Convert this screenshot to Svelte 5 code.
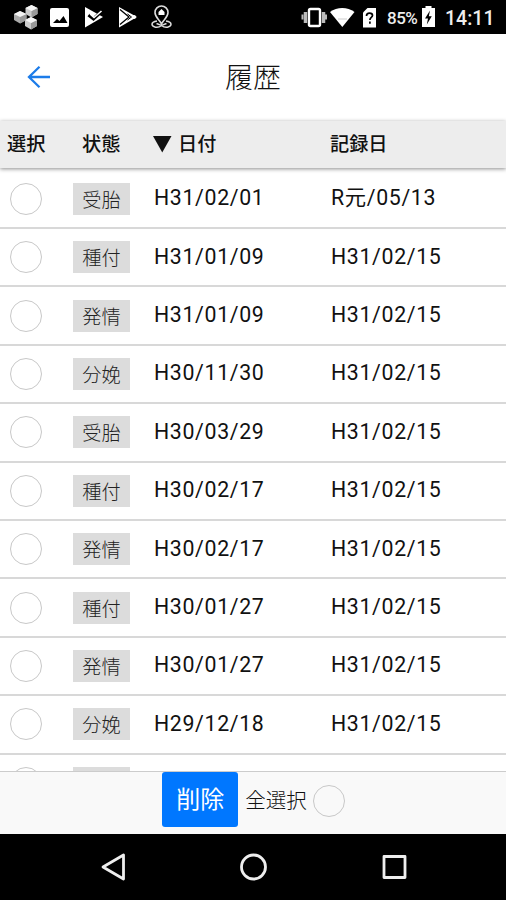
<script lang="ts">
	type Row = { status: string; date: string; recorded: string };

	const rows: Row[] = [
		{ status: '受胎', date: 'H31/02/01', recorded: 'R元/05/13' },
		{ status: '種付', date: 'H31/01/09', recorded: 'H31/02/15' },
		{ status: '発情', date: 'H31/01/09', recorded: 'H31/02/15' },
		{ status: '分娩', date: 'H30/11/30', recorded: 'H31/02/15' },
		{ status: '受胎', date: 'H30/03/29', recorded: 'H31/02/15' },
		{ status: '種付', date: 'H30/02/17', recorded: 'H31/02/15' },
		{ status: '発情', date: 'H30/02/17', recorded: 'H31/02/15' },
		{ status: '種付', date: 'H30/01/27', recorded: 'H31/02/15' },
		{ status: '発情', date: 'H30/01/27', recorded: 'H31/02/15' },
		{ status: '分娩', date: 'H29/12/18', recorded: 'H31/02/15' },
		{ status: '', date: '', recorded: '' }
	];

	let selected: boolean[] = $state(rows.map(() => false));
	let allSelected: boolean = $derived(selected.every((s) => s));

	function toggleAll() {
		const next = !allSelected;
		selected = rows.map(() => next);
	}
</script>

<div class="screen">
	<div class="statusbar">
		<svg class="notifications" width="180" height="34" viewBox="0 0 180 34">
			<!-- hexagons -->
			<path d="M31.500 5l6 3v6l-6 3.500-6-3.500V8z" fill="#ccc" />
			<path d="M20 11l6.500 3v6L20 23.500 14 20v-6z" fill="#aaa" />
			<path d="M31 17l6 3v6l-6 3.500-6-3.500v-6z" fill="#ccc" />
			<path d="M31.500 11l6-3v6l-6 3.500zM20 17l6.500-3v6L20 23.500zM31 23l6-3v6l-6 3.500z" fill="#999" />
			<path d="M25.500 8l6-3 6 3-6 3zM14 14l6-3 6.500 3-6.500 3zM25 20l6-3 6 3-6 3z" fill="#f4f4f4" />
			<!-- picture -->
			<rect x="50" y="8" width="19" height="19" rx="2" fill="#fff" />
			<path d="M53 23l4-4 2.500 2 4-5 4 7z" fill="#000" />
			<!-- play with check -->
			<path d="M85 7l18 10-18 10.500z" fill="#fff" />
			<path d="M88.500 15l5 4 9.500-9" fill="none" stroke="#000" stroke-width="3.200" />
			<path d="M90 14l4 3.500 7.500-6.500" fill="none" stroke="#fff" stroke-width="1.600" />
			<!-- play -->
			<path d="M119 7l18 10-18 10.500z" fill="#fff" />
			<path d="M120 9.500l9 7.500-9 7.500" fill="none" stroke="#000" stroke-width="1.300" />
			<path d="M127.500 14l4 3-4 3" fill="none" stroke="#000" stroke-width="1" />
			<circle cx="134" cy="17" r="2" fill="#fff" />
			<!-- pin -->
			<path d="M161.500 24c-2-4.500-6.500-6.500-6.500-11.500a6.500 6.500 0 0 1 13 0c0 5-4.500 7-6.500 11.500z" fill="none" stroke="#ddd" stroke-width="1.600" />
			<path d="M158.500 15v-3l3-3 3 3v3z" fill="#fff" />
			<path d="M157 21c-3 .500-5 1.500-5 3.200 0 1.500 1.500 2.500 3.500 3 2.500.500 4.500-.500 6-1.700 1.500 1.200 3.500 2.200 6 1.700 2-.500 3.500-1.500 3.500-3 0-1.700-2-2.700-5-3.200M156.500 23.500l5 2 5-2" fill="none" stroke="#ddd" stroke-width="1.500" />
		</svg>
		<div class="system">
			<svg width="85" height="34" viewBox="300 0 85 34">
				<rect x="309" y="9" width="11" height="17" rx="1.500" fill="none" stroke="#fff" stroke-width="2.400" />
				<path d="M305.500 12v11M323.500 12v11" stroke="#bbb" stroke-width="3.500" />
				<path d="M302.500 14.500v5M326 14.500v5" stroke="#bbb" stroke-width="2" />
				<path d="M330 12c7-5.500 17.500-5.500 24.500 0l-12.200 15z" fill="#fff" />
				<path d="M338 19h9" stroke="#ccc" stroke-width="1" />
				<path d="M367.500 8H376v19.500h-13V12.500z" fill="#fff" />
				<path d="M366.500 16c0-4 6-3.500 6-.500 0 2-2.600 2-2.600 4.500M369.900 21.500v2.200" fill="none" stroke="#000" stroke-width="1.700" />
			</svg>
			<span class="percent">85%</span>
			<svg width="14" height="34" viewBox="420 0 14 34">
				<path d="M421 8h3.500V6h6v2h3.500v19h-13z" fill="#fff" />
				<path d="M429 10.500l-5 8h3l-1.200 6 5-8.200h-3z" fill="#000" />
			</svg>
			<span class="clock">14:11</span>
		</div>
	</div>

	<header>
		<button class="back" aria-label="戻る">
			<svg width="24" height="24" viewBox="0 0 24 24">
				<path d="M12.500 1.700L2 12l10.500 10.300M2 12h21" fill="none" stroke="#1c7ce9" stroke-width="2.300" />
			</svg>
		</button>
		<h1>履歴</h1>
	</header>

	<div class="columns heading">
		<span>選択</span>
		<span>状態</span>
		<span class="sort"><svg width="19" height="17" viewBox="0 0 19 17"><path d="M0 0h18.500L9.250 16.500z" fill="#111" /></svg>日付</span>
		<span>記録日</span>
	</div>

	<div class="list">
		{#each rows as row, i}
			<div class="columns row">
				<button class="radio" class:on={selected[i]} aria-label="選択" onclick={() => (selected[i] = !selected[i])}></button>
				<span class="badge">{row.status}</span>
				<span class="date">{row.date}</span>
				<span class="date">{row.recorded}</span>
			</div>
		{/each}
	</div>

	<footer>
		<button class="delete">削除</button>
		<span class="all">全選択</span>
		<button class="radio" class:on={allSelected} aria-label="全選択" onclick={toggleAll}></button>
	</footer>

	<nav>
		<svg width="506" height="66" viewBox="0 0 506 66">
			<g fill="none" stroke="#eee" stroke-width="2.800" stroke-linejoin="round">
				<path d="M123.500 21v24L103 33z" />
				<circle cx="253.500" cy="33" r="12" />
				<rect x="384" y="22.500" width="21" height="21" />
			</g>
		</svg>
	</nav>
</div>

<style>
	:global(body) {
		margin: 0;
	}

	.screen {
		display: flex;
		flex-direction: column;
		width: 506px;
		height: 900px;
		overflow: hidden;
		background: #fff;
		color: #111;
		font-family: Roboto, "Noto Sans CJK JP", sans-serif;
	}

	button {
		padding: 0;
		border: 0;
		background: none;
		font-family: inherit;
	}

	svg {
		display: block;
	}

	.statusbar {
		display: flex;
		justify-content: space-between;
		flex: none;
		height: 34px;
		background: #000;
		color: #eee;
	}

	.system {
		display: flex;
		align-items: center;
		width: 206px;
	}

	.percent {
		width: 34px;
		margin: 2px 0 0 2px;
		font-size: 17px;
		font-weight: 500;
		letter-spacing: -0.5px;
	}

	.clock {
		margin: 2px 0 0 10px;
		font-size: 19.5px;
		font-weight: 500;
	}

	header {
		display: grid;
		grid-template-columns: 77px 1fr 77px;
		align-items: center;
		flex: none;
		height: 87px;
	}

	.back {
		justify-self: center;
		margin-top: -2px;
	}

	h1 {
		margin: 2px 0 0;
		font-size: 28px;
		font-weight: 300;
		line-height: 40px;
		text-align: center;
	}

	.columns {
		display: grid;
		grid-template-columns: 73px 81px 177px 1fr;
		align-items: center;
		flex: none;
	}

	.heading {
		position: relative;
		height: 47px;
		box-sizing: border-box;
		background: #ededed;
		box-shadow: 0 1px 4px rgba(0, 0, 0, 0.45);
		font-size: 19.2px;
		font-weight: 500;
		line-height: 28px;
	}

	.heading span {
		margin-left: -1px;
	}

	.heading span:first-child {
		padding-left: 8px;
	}

	.heading span:nth-child(2) {
		padding-left: 10px;
	}

	.sort {
		display: flex;
		align-items: center;
		gap: 6px;
	}

	.sort svg {
		margin-top: -1px;
	}

	.list {
		flex: 1;
		min-height: 0;
		padding-top: 2.6px;
		overflow: hidden;
	}

	.row {
		height: 58.4px;
		box-sizing: border-box;
		border-bottom: 2px solid #d8d8d8;
	}

	.radio {
		width: 32px;
		height: 32px;
		box-sizing: border-box;
		border: 1.5px solid #c8c8c8;
		border-radius: 50%;
	}

	.radio.on {
		border-color: #0077ff;
		background: #0077ff;
	}

	.row .radio {
		margin-left: 10px;
	}

	.badge {
		width: 57px;
		height: 32px;
		background: #dcdcdc;
		color: #222;
		font-size: 19.2px;
		font-weight: 300;
		line-height: 35px;
		text-align: center;
	}

	.date {
		margin-top: -1px;
		font-size: 21.3px;
		line-height: 30px;
		letter-spacing: 0.65px;
	}

	footer {
		display: flex;
		justify-content: center;
		flex: none;
		height: 63px;
		padding-left: 1px;
		box-sizing: border-box;
		border-top: 1px solid #ccc;
		background: #f9f9f9;
	}

	.delete {
		width: 76px;
		height: 55px;
		border-radius: 3px;
		background: #0077ff;
		color: #fff;
		font-size: 24px;
		line-height: 52px;
	}

	.all {
		margin: 13px 6px 0 7px;
		font-size: 20.5px;
		font-weight: 300;
		line-height: 32px;
	}

	footer .radio {
		margin-top: 13px;
	}

	nav {
		flex: none;
		height: 66px;
		background: #000;
	}
</style>
